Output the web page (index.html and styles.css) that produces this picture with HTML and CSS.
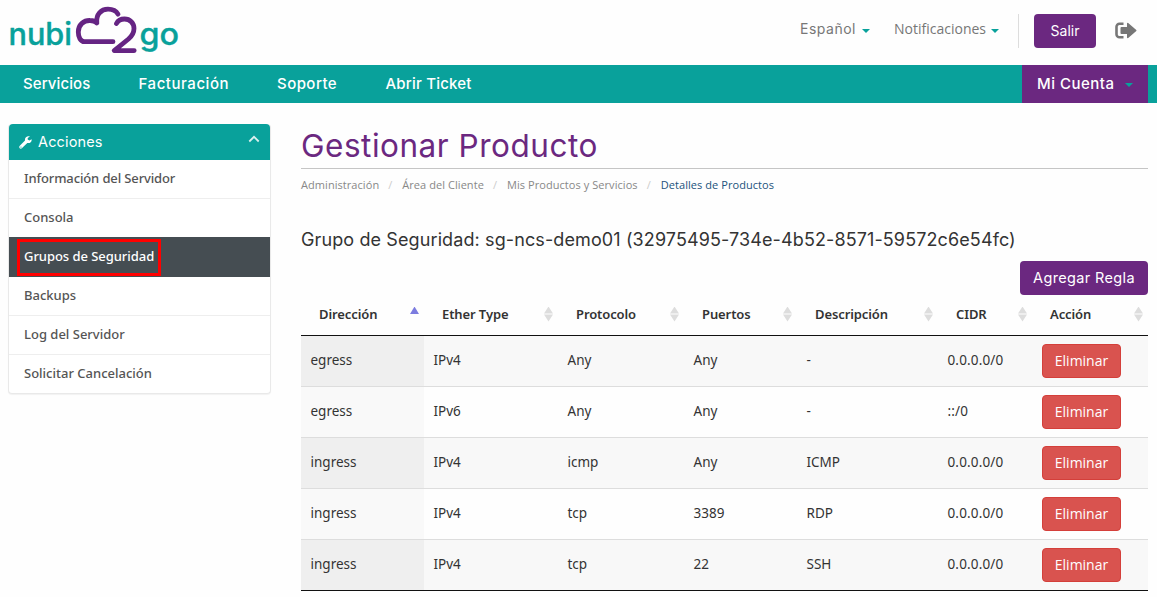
FILE: index.html
```html
<!DOCTYPE html>
<html lang="es">
<head>
<meta charset="utf-8">
<title>Gestionar Producto</title>
<link rel="stylesheet" href="styles.css">
</head>
<body>
<header class="top">
  <svg class="logo" width="180" height="60" viewBox="0 0 180 60" role="img" aria-label="nubi2go">
    <text class="logo-text" x="8.500" y="44.500" textLength="63.500" lengthAdjust="spacingAndGlyphs">nubi</text>
    <g fill="none" stroke="#652483" stroke-width="4.8" stroke-linecap="round" stroke-linejoin="round">
      <path d="M113 41.7H84.500C80.500 41.700 78.300 37 78.300 32C78.300 24.500 84 20.300 90 20.500C93 20.500 95.500 21.500 96.800 23"/>
      <path d="M96.800 22.500C96 14.500 101 9.200 108 9.200C113 9.200 116.500 11.500 118 14.200"/>
      <path d="M116.500 23.500C118 20.500 121 19 124.500 19C130 19 134 23 134 28.500C134 33 132 36 128.500 39L114.200 50.600H134.200"/>
    </g>
    <text class="logo-text" x="139.500" y="44.500" textLength="39.500" lengthAdjust="spacingAndGlyphs">go</text>
  </svg>
  <div class="tools">
    <a class="tool lang">Español<i class="caret"></i></a>
    <a class="tool notif">Notificaciones<i class="caret"></i></a>
    <span class="sep"></span>
    <a class="btn logout">Salir</a>
    <svg class="exit" width="22" height="18" viewBox="0 0 22 18"><path d="M8.500 1.700H4.500A3 3 0 0 0 1.500 4.700V12.300A3 3 0 0 0 4.500 15.300H8.500" fill="none" stroke="#777" stroke-width="2.600"/><path d="M6.500 5H12V1.200Q12.500.6 13.200 1L21.300 8Q21.700 8.500 21.300 9L13.200 16Q12.500 16.400 12 15.800V12H6.500Q5.500 12 5.500 11V6Q5.500 5 6.500 5Z" fill="#777"/></svg>
  </div>
</header>
<nav class="nav">
  <a class="n1">Servicios</a><a class="n2">Facturación</a><a class="n3">Soporte</a><a class="n4">Abrir Ticket</a>
  <a class="account">Mi Cuenta<i class="caret"></i></a>
</nav>
<div class="page">
  <aside class="panel">
    <div class="panel-head">
      <svg width="13" height="13" viewBox="0 0 13 13"><path d="M12.600 3.200L10.400 4.500L8.700 3.600V1.900L10.900.6C8.300-.4 5.500 1.500 6 4.600L.8 9.700C-.9 11.500 1.400 13.700 3.100 12.100L8.300 6.900C11 7.500 13.100 5.500 12.600 3.200ZM2 11.700A.6.6 0 1 1 2 10.500A.6.6 0 0 1 2 11.700Z" fill="#fff"/></svg>
      <span>Acciones</span>
      <svg class="chev" width="12" height="8" viewBox="0 0 12 8"><path d="M1.300 6.500L6 1.800L10.700 6.500" fill="none" stroke="#d9efee" stroke-width="1.800"/></svg>
    </div>
    <a class="item"><span class="s1">Información del Servidor</span></a>
    <a class="item">Consola</a>
    <a class="item active"><span class="mark">Grupos de Seguridad</span></a>
    <a class="item">Backups</a>
    <a class="item">Log del Servidor</a>
    <a class="item">Solicitar Cancelación</a>
  </aside>
  <main class="main">
    <h1>Gestionar Producto</h1>
    <ol class="crumbs"><li>Administración</li><li>Área del Cliente</li><li>Mis Productos y Servicios</li><li class="current">Detalles de Productos</li></ol>
    <h4>Grupo de Seguridad: sg-ncs-demo01 (32975495-734e-4b52-8571-59572c6e54fc)</h4>
    <div class="actions"><a class="btn add">Agregar Regla</a></div>
    <table class="rules">
      <colgroup><col class="c1"><col class="c2"><col class="c3"><col class="c4"><col class="c5"><col class="c6"><col class="c7"></colgroup>
      <thead><tr>
        <th><div class="th">Dirección<i class="sort asc"></i></div></th>
        <th><div class="th">Ether Type<i class="sort"></i></div></th>
        <th><div class="th">Protocolo<i class="sort"></i></div></th>
        <th><div class="th">Puertos<i class="sort"></i></div></th>
        <th><div class="th">Descripción<i class="sort"></i></div></th>
        <th><div class="th">CIDR<i class="sort"></i></div></th>
        <th><div class="th">Acción<i class="sort"></i></div></th>
      </tr></thead>
      <tbody>
        <tr><td>egress</td><td>IPv4</td><td>Any</td><td>Any</td><td>-</td><td class="cidr">0.0.0.0/0</td><td><a class="del">Eliminar</a></td></tr>
        <tr><td>egress</td><td>IPv6</td><td>Any</td><td>Any</td><td>-</td><td class="cidr">::/0</td><td><a class="del">Eliminar</a></td></tr>
        <tr><td>ingress</td><td>IPv4</td><td>icmp</td><td>Any</td><td>ICMP</td><td class="cidr">0.0.0.0/0</td><td><a class="del">Eliminar</a></td></tr>
        <tr><td>ingress</td><td>IPv4</td><td>tcp</td><td>3389</td><td>RDP</td><td class="cidr">0.0.0.0/0</td><td><a class="del">Eliminar</a></td></tr>
        <tr><td>ingress</td><td>IPv4</td><td>tcp</td><td>22</td><td>SSH</td><td class="cidr">0.0.0.0/0</td><td><a class="del">Eliminar</a></td></tr>
      </tbody>
    </table>
  </main>
</div>
</body>
</html>
```
FILE: styles.css
```css
* { box-sizing: border-box; }
body { margin: 0; height: 597px; overflow: hidden; background: #fefefe; color: #333; font-family: "Noto Sans", sans-serif; font-size: 13.5px; white-space: nowrap; }
.top { height: 65px; display: flex; justify-content: space-between; align-items: flex-start; padding-right: 20px; }
.logo { display: block; }
.logo-text { font: 500 31px Inter, sans-serif; fill: #09a19b; stroke: #09a19b; stroke-width: .4px; stroke-linejoin: round; }
.tools { display: flex; align-items: center; padding-top: 14px; height: 48px; font-family: Inter, sans-serif; color: #777; }
.tool { display: flex; align-items: center; justify-content: space-between; font-size: 14px; height: 30px; margin-top: -6px; }
.lang { width: 70px; margin-right: 24px; letter-spacing: .5px; }
.notif { width: 105px; margin-right: 19px; font-family: "Open Sans", sans-serif; font-size: 14px; }
.caret { width: 0; height: 0; border: 4px solid transparent; border-top-color: #09a19b; border-bottom: 0; margin-top: 5px; }
.sep { width: 1px; height: 34px; background: #ddd; margin-right: 15px; }
.btn { display: flex; align-items: center; justify-content: center; height: 34px; border-radius: 4px; background: #6b2880; color: #fff; font-family: Inter, sans-serif; font-size: 14px; padding-bottom: 2px; }
.logout { width: 62px; }
.add { width: 128px; font-size: 14.5px; letter-spacing: .35px; }
.exit { margin-left: 19px; }
.nav { height: 38px; display: flex; align-items: center; background: #09a19b; color: #fff; font: 500 15px/38px Inter, sans-serif; padding-left: 23px; padding-right: 9px; }
.nav a { height: 38px; }
.n1 { width: 115.500px; letter-spacing: .1px; }
.n2 { width: 138.500px; letter-spacing: .55px; }
.n3 { width: 108.500px; letter-spacing: .45px; }
.n4 { letter-spacing: .2px; }
.account { margin-left: auto; width: 126px; padding: 0 15px; background: #6b2880; display: flex; align-items: center; justify-content: space-between; letter-spacing: .5px; }
.account .caret { margin-top: 2px; }
.page { display: flex; align-items: flex-start; gap: 30px; padding: 21px 9px 0 8px; }
.panel { width: 263px; border: 1px solid #e9e9e9; border-top: 0; border-radius: 4px; box-shadow: 0 1px 1px rgba(0,0,0,.05); background: #fff; }
.panel-head { height: 36px; background: #09a19b; color: #fff; border-radius: 4px 4px 0 0; display: flex; align-items: center; gap: 6px; padding: 0 10px; font: 14.5px Inter, sans-serif; letter-spacing: .15px; }
.panel-head span { margin-top: -2px; }
.chev { margin: -6px 0 0 auto; }
.item { display: flex; align-items: center; height: 39px; padding-left: 15px; padding-bottom: 2px; border-bottom: 1px solid #eee; color: #555; font: 500 13px "Noto Sans", sans-serif; }
.s1 { letter-spacing: -.13px; }
.item:last-child { border-bottom: 0; height: 38px; }
.active { height: 40px; margin-top: -1px; padding: 0 0 0 8px; background: #454d52; border-bottom: 0; color: #fff; }
.mark { display: flex; align-items: center; width: 144px; height: 37px; border: 3px solid #f00; padding: 0 0 2px 4px; letter-spacing: -.05px; }
.main { flex: 1; min-width: 0; }
h1 { margin: 0; height: 45px; border-bottom: 1px solid #c5c5c5; color: #6b2880; font: 400 31.500px/43px Inter, sans-serif; letter-spacing: .52px; }
.crumbs { display: flex; margin: 0; padding: 0; list-style: none; font: 11px/32px "Open Sans", sans-serif; letter-spacing: .06px; color: #888; }
.crumbs li + li::before { content: "/"; color: #ccc; padding: 0 10px 0 9px; }
.crumbs .current { color: #23527c; }
h4 { margin: 22px 0 0; height: 38px; font: 400 18px/34px Inter, sans-serif; letter-spacing: .11px; }
.actions { display: flex; justify-content: flex-end; }
.rules { width: 847px; table-layout: fixed; border-collapse: separate; border-spacing: 0; border-bottom: 1px solid #111; }
.c1 { width: 123px; } .c2 { width: 134px; } .c3 { width: 126px; } .c4 { width: 113px; } .c5 { width: 141px; } .c6 { width: 94px; } .c7 { width: 116px; }
th { height: 41px; padding: 0 4px 2px 18px; text-align: left; border-bottom: 1px solid #111; font-weight: 600; font-size: 13px; letter-spacing: -.1px; }
.th { display: flex; align-items: center; justify-content: space-between; height: 36px; }
.sort { width: 9px; height: 15px; background: #ddd; clip-path: polygon(50% 0, 100% 46%, 0 46%, 0 54%, 100% 54%, 50% 100%, 0 54%, 0 46%); margin: 0 1px 0 0; }
.asc { background: #7c7cdf; clip-path: polygon(50% 0, 100% 50%, 0 50%); }
td { height: 51px; padding: 0 0 3px 9.5px; border-bottom: 1px solid #ddd; }
.cidr { letter-spacing: .15px; }
td:last-child { padding: 0 0 1px 10px; }
tbody tr:last-child td { border-bottom: 0; height: 50px; }
tbody tr:nth-child(odd) td { background: #f8f8f8; }
tbody tr:nth-child(odd) td:first-child { background: #efefef; }
tbody tr:nth-child(even) td:first-child { background: #f9f9f9; }
.del { display: flex; align-items: center; justify-content: center; width: 79px; height: 34px; padding-bottom: 0; background: #d9534f; border: 1px solid #d43f3a; border-radius: 4px; color: #fff; font: 14px "Open Sans", sans-serif; }
```
